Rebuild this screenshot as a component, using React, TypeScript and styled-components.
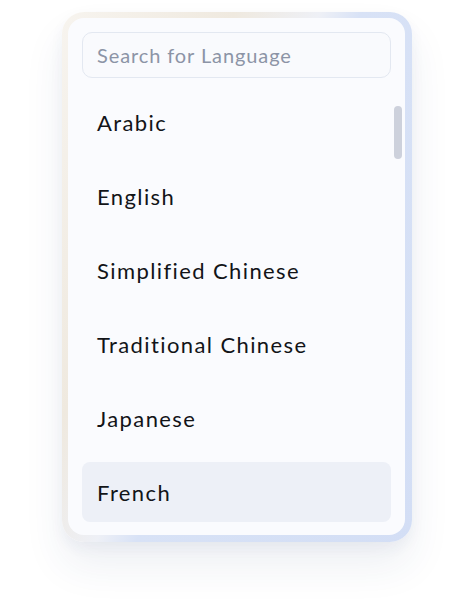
import React from "react";
import styled, { createGlobalStyle } from "styled-components";

const Global = createGlobalStyle`
  html, body { margin: 0; padding: 0; background: #ffffff; }
  body { font-family: Lato, "Noto Sans", sans-serif; }
`;

const Page = styled.div`
  width: 474px;
  height: 599px;
  display: flex;
  justify-content: center;
  padding-top: 12px;
  box-sizing: border-box;
  overflow: hidden;
`;

const Frame = styled.div`
  width: 350px;
  height: 530px;
  box-sizing: border-box;
  padding: 6px 7px 7px 6px;
  border-radius: 22px;
  background: linear-gradient(113deg, #f7f4ef 0%, #efe9df 30%, #eef0f6 45%, #d8e2f6 52%, #d3def5 100%);
  box-shadow: 0 24px 40px rgba(40, 60, 110, 0.08), 0 6px 14px rgba(40, 60, 110, 0.05);
`;

const Panel = styled.div`
  position: relative;
  height: 100%;
  box-sizing: border-box;
  background: #fafbfe;
  border-radius: 16px;
  padding: 14px 14px 13px 14px;
  display: flex;
  flex-direction: column;
`;

const Search = styled.input`
  height: 46px;
  box-sizing: border-box;
  border: 1px solid #e3e8f1;
  border-radius: 10px;
  background: #f9fafd;
  padding: 0 14px;
  font-family: Lato, "Noto Sans", sans-serif;
  font-size: 20px;
  letter-spacing: 0.9px;
  color: #2a2f3a;
  outline: none;
  &::placeholder { color: #8c94a6; }
`;

const List = styled.ul`
  list-style: none;
  margin: 14px 0 0 0;
  padding: 0;
  display: flex;
  flex-direction: column;
  gap: 14px;
`;

const Item = styled.li<{ $active?: boolean }>`
  height: 60px;
  display: flex;
  align-items: center;
  padding: 0 15px;
  border-radius: 8px;
  background: ${(p) => (p.$active ? "#edf0f7" : "transparent")};
  font-size: 22px;
  letter-spacing: 1.4px;
  font-variant-ligatures: none;
  color: #121418;
`;

const Thumb = styled.div`
  position: absolute;
  right: 3px;
  top: 88px;
  width: 8px;
  height: 53px;
  border-radius: 4px;
  background: #cdd1dc;
`;

const languages = [
  "Arabic",
  "English",
  "Simplified Chinese",
  "Traditional Chinese",
  "Japanese",
  "French",
];

export default function App() {
  return (
    <>
      <Global />
      <Page>
        <Frame>
          <Panel>
            <Search placeholder="Search for Language" />
            <List>
              {languages.map((l) => (
                <Item key={l} $active={l === "French"}>
                  {l}
                </Item>
              ))}
            </List>
            <Thumb />
          </Panel>
        </Frame>
      </Page>
    </>
  );
}
